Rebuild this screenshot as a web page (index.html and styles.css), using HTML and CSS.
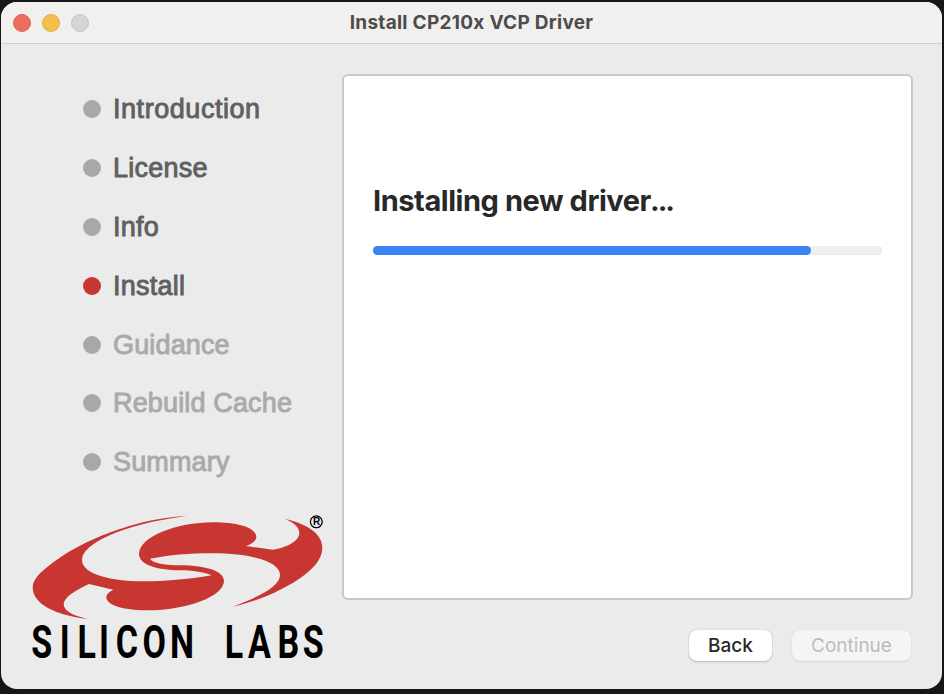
FILE: index.html
```html
<!DOCTYPE html>
<html lang="en">
<head>
<meta charset="utf-8">
<title>Install CP210x VCP Driver</title>
<link rel="stylesheet" href="styles.css">
</head>
<body>
<div class="window">
  <header class="titlebar">
    <div class="lights"><i class="light close"></i><i class="light minimize"></i><i class="light disabled"></i></div>
    <h1 class="title"><span>Install CP210x VCP Driver</span></h1>
  </header>
  <div class="body">
    <aside class="sidebar">
      <ol class="steps">
        <li class="step"><span>Introduction</span></li>
        <li class="step"><span>License</span></li>
        <li class="step"><span>Info</span></li>
        <li class="step current"><span>Install</span></li>
        <li class="step pending"><span>Guidance</span></li>
        <li class="step pending"><span>Rebuild Cache</span></li>
        <li class="step pending"><span>Summary</span></li>
      </ol>
      <svg class="logo" viewBox="25 508 305 170" width="305" height="170">
        <path fill="#c83632" d="M186.500 516C164 517 140 522 120 529C108 533 97 537.500 86.700 542.300C74 548.500 63 555 53.300 562.300C41 571.500 32.700 579 32.700 587.500C32.700 604 55 615 87.700 619C72 615.500 63.700 610.500 63.700 604.300C63.700 597 76 590 89 584L113.300 589.700C109 592 106.300 594.500 106.300 597C106.300 605 123 610.300 146.700 610.300C188 610.300 224 596 224 581C224 570 203 565.500 180 565.300C163 565.300 152 562.500 150 558.700C170 555 190 553.200 213.300 553.300C253 553.500 280 562 280 575C280 586 261 596 232.700 606.700C259 600.500 277 592 290 584.500C310 573 322.300 561 322.300 547.700C322.300 534.500 309 524.500 285.300 519C294 522.500 299.300 527.500 299.300 533C299.300 540.500 288 547.500 272.700 549.700L246 546C252.500 543.500 256.300 540.500 256.300 537C256.300 527.500 237 522.300 213.300 522.300C176 522.300 139 537 139 554C139 564 155 570.200 180 570.200C192 570.200 203 571.800 211.700 575.300C188 579.500 163 581.300 144 581.300C107 581.300 82 573 82 560C82 544 121 524.500 186.500 516Z"/>
        <text class="wordmark" transform="translate(0 658.300) scale(.74 1)" x="56.300 87.400 117.200 140.500 171.400 208.400 246 274 316.300 350.600 389.700 423.200" y="0">SILICON LABS</text>
        <circle cx="316.300" cy="521.800" r="5.900" fill="none" stroke="#000" stroke-width="1.300"/>
        <text class="registered" x="316.500" y="525.400">R</text>
      </svg>
    </aside>
    <div class="content">
      <main class="panel">
        <h2 class="status"><span>Installing new driver<span class="dots">...</span></span></h2>
        <div class="track" role="progressbar"><div class="bar"></div></div>
      </main>
      <footer class="actions">
        <button class="button back">Back</button>
        <button class="button continue" disabled>Continue</button>
      </footer>
    </div>
  </div>
</div>
</body>
</html>
```
FILE: styles.css
```css
* { box-sizing: border-box; }
html { background: #151617; }
body { margin: 0; padding: 2px 2px 5px 1px; height: 694px; overflow: hidden; font-family: Inter, sans-serif; }
.window { height: 687px; background: #ebebeb; border-radius: 16px; overflow: hidden; display: flex; flex-direction: column; }
.titlebar { height: 42px; flex: none; background: #f1f0ee; border-bottom: 1px solid #cfd0cf; display: grid; grid-template-columns: 1fr auto 1fr; align-items: center; }
.lights { display: flex; gap: 11.2px; padding-left: 11.7px; }
.light { width: 18px; height: 18px; border-radius: 50%; border: 1px solid; }
.close { background: #ed6b5f; border-color: #dd6458; }
.minimize { background: #f5bf4f; border-color: #dfac45; }
.disabled { background: #d7d6d4; border-color: #c5c4c2; }
.title { margin: 0; font-size: 19px; line-height: 24px; font-weight: 650; letter-spacing: .28px; color: #4c4c4b; }
.body { display: flex; flex: 1; min-height: 0; }
.sidebar { width: 341px; flex: none; display: flex; flex-direction: column; }
.steps { list-style: none; margin: 36px 0 0 82px; padding: 0; font-family: "Liberation Sans", sans-serif; font-size: 27px; letter-spacing: .25px; color: #606060; }
.step { height: 58.8px; display: flex; align-items: center; gap: 12px; -webkit-text-stroke: .9px currentColor; }
.step:first-child { letter-spacing: .55px; }
.step span { padding-top: 1px; }
.step::before { content: ""; width: 18px; height: 18px; border-radius: 50%; background: #a8a8a8; }
.current::before { background: #c83632; }
.pending { color: #aaa; letter-spacing: .15px; }
.logo { margin: 16.400px 0 0 24px; display: block; flex: none; overflow: visible; }
.wordmark { font: 700 46px Roboto, sans-serif; text-anchor: middle; }
.registered { font: 700 10px "Liberation Sans", sans-serif; text-anchor: middle; }
.content { width: 571px; padding-top: 30px; display: flex; flex-direction: column; }
.panel { height: 526px; background: #fff; border: 2px solid #c8c8c8; border-radius: 6px; padding: 105px 29px 0; }
.status { margin: 0; font-size: 29px; line-height: 40px; font-weight: 700; letter-spacing: -.45px; color: #282828; white-space: nowrap; }
.dots { letter-spacing: -2px; margin-left: -1px; }
.track { margin-top: 25px; height: 9px; border-radius: 5px; background: #f0f0f0; box-shadow: inset 0 0 1px #ccc; }
.bar { width: 86%; height: 9px; border-radius: 5px; background: #3c82f7; }
.actions { display: flex; justify-content: flex-end; gap: 20px; padding-top: 30px; }
.button { height: 31px; border: 0; border-radius: 8px; padding: 0; font: 400 19px/31px Inter, sans-serif; background: #fff; color: #282828; box-shadow: 0 0 1px #aaa, 0 1px 2px #bbb; }
.back { width: 83px; font-weight: 450; }
.continue { width: 119px; margin-right: 2px; color: #bcbcbc; background: #f5f5f5; box-shadow: 0 0 1px #bbb, 0 1px 1px #ddd; }
```
